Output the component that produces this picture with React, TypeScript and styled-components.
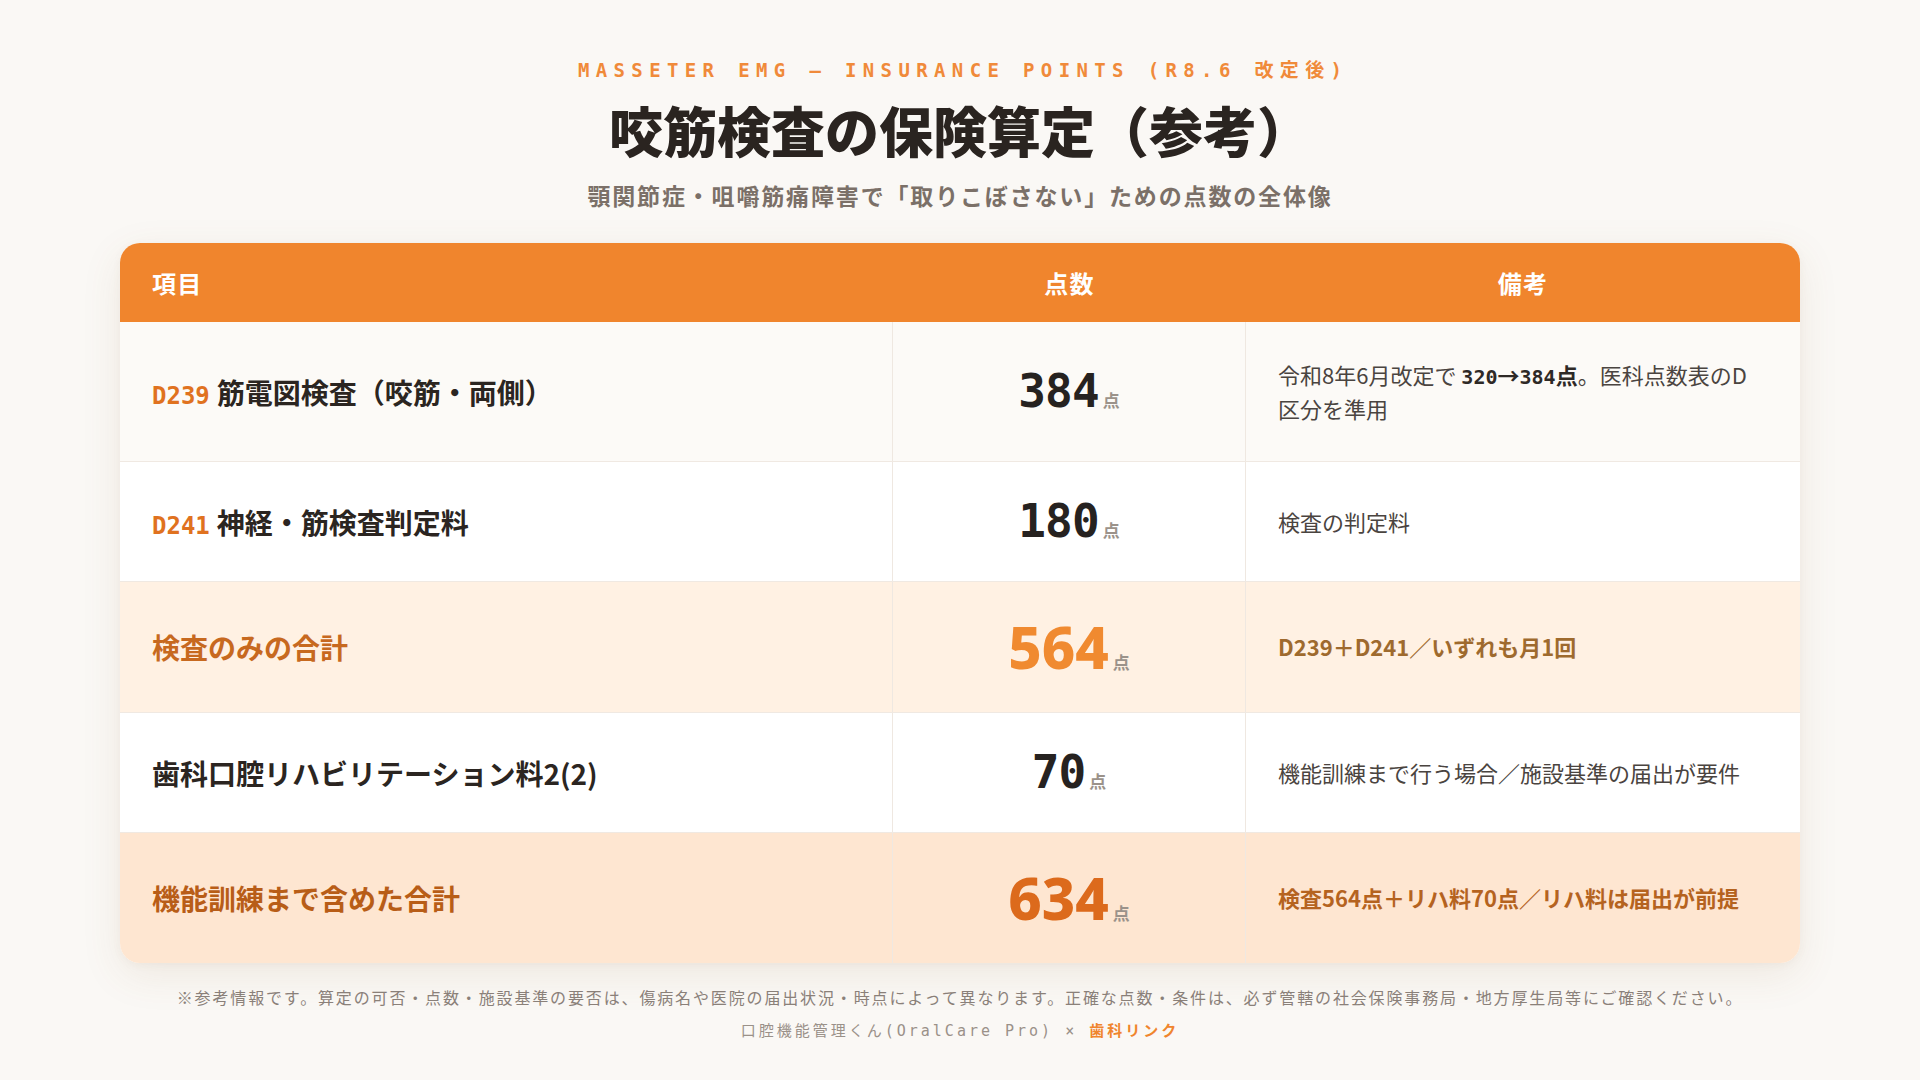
import React from "react";
import styled, { createGlobalStyle } from "styled-components";

const GlobalStyle = createGlobalStyle`
  html, body {
    margin: 0;
    padding: 0;
    background: #faf8f5;
  }
  body {
    font-family: "Noto Sans CJK JP", "Noto Sans", sans-serif;
    color: #2b2521;
  }
  * { box-sizing: border-box; }
`;

const MONO = `"DejaVu Sans Mono", "Noto Sans CJK JP", monospace`;

const Page = styled.main`
  width: 1920px;
  height: 1080px;
  padding: 58px 120px 0;
  display: flex;
  flex-direction: column;
  align-items: center;
  background: #faf8f5;
`;

const Eyebrow = styled.div`
  font-family: ${MONO};
  font-weight: 700;
  font-size: 19px;
  line-height: 24px;
  letter-spacing: 0.335em;
  color: #f08a3a;
  padding-left: 0.335em;
`;

const Title = styled.h1`
  margin: 15px 0 0;
  font-family: "Noto Sans CJK JP", sans-serif;
  font-weight: 900;
  font-size: 54px;
  line-height: 66px;
  letter-spacing: 0;
  color: #2a2420;
`;

const Subtitle = styled.p`
  margin: 16px 0 0;
  font-weight: 700;
  font-size: 23px;
  line-height: 32px;
  letter-spacing: 0.08em;
  color: #7b7068;
`;

const Table = styled.section`
  margin-top: 32px;
  width: 1680px;
  border-radius: 20px;
  overflow: hidden;
  background: #fff;
  box-shadow: 0 12px 40px rgba(140, 96, 50, 0.1), 0 2px 8px rgba(140, 96, 50, 0.05);
`;

const COLS = "773px 353px 1fr";

const HeaderRow = styled.div`
  display: grid;
  grid-template-columns: ${COLS};
  height: 79px;
  background: #f0852d;
  color: #fff;
`;

const HeaderCell = styled.div<{ $align: "left" | "center" }>`
  display: flex;
  align-items: center;
  justify-content: ${(p) => (p.$align === "center" ? "center" : "flex-start")};
  padding: 0 32px;
  font-weight: 700;
  font-size: 24px;
  letter-spacing: 0.05em;
`;

type Tone = "soft" | "white" | "total" | "grand";

const isSum = (t: Tone) => t === "total" || t === "grand";

const bg: Record<Tone, string> = {
  soft: "#fcfaf7",
  white: "#ffffff",
  total: "#fff1e3",
  grand: "#fee6d1",
};

const Row = styled.div<{ $tone: Tone }>`
  display: grid;
  grid-template-columns: ${COLS};
  background: ${(p) => bg[p.$tone]};
  border-top: 1px solid #f0e9e2;
  &:nth-child(2) {
    border-top: none;
  }
`;

const Cell = styled.div`
  display: flex;
  align-items: center;
  padding: 36px 32px;
  border-right: 1px solid #efe8e1;
  &:last-child {
    border-right: none;
  }
`;

const labelColor: Record<Tone, string> = {
  soft: "#2b2521",
  white: "#2b2521",
  total: "#c7691f",
  grand: "#b85d17",
};

const Label = styled.div<{ $tone: Tone }>`
  font-weight: 700;
  font-size: 28px;
  line-height: 38px;
  color: ${(p) => labelColor[p.$tone]};
`;

const Code = styled.span`
  font-family: ${MONO};
  font-weight: 700;
  font-size: 24px;
  line-height: 1;
  color: #e0721f;
  margin-right: 7px;
`;

const PointsCell = styled(Cell)`
  justify-content: center;
`;

const Points = styled.div`
  display: flex;
  align-items: baseline;
  gap: 4px;
`;

const numColor: Record<Tone, string> = {
  soft: "#262220",
  white: "#262220",
  total: "#f08a30",
  grand: "#dc6a1c",
};

const Num = styled.span<{ $tone: Tone }>`
  font-family: ${(p) => (isSum(p.$tone) ? `"Noto Sans", "Open Sans", sans-serif` : MONO)};
  font-weight: ${(p) => (isSum(p.$tone) ? 800 : 700)};
  font-size: ${(p) => (isSum(p.$tone) ? "58px" : "46px")};
  line-height: ${(p) => (isSum(p.$tone) ? "58px" : "47px")};
  color: ${(p) => numColor[p.$tone]};
  letter-spacing: ${(p) => (isSum(p.$tone) ? "0" : "-0.02em")};
`;

const Unit = styled.span`
  font-size: 17px;
  font-weight: 700;
  color: #9b928a;
`;

const noteColor: Record<Tone, string> = {
  soft: "#4a4440",
  white: "#4a4440",
  total: "#9e6a2e",
  grand: "#b5631f",
};

const Note = styled.div<{ $tone: Tone }>`
  font-size: 22px;
  line-height: 33.5px;
  font-weight: ${(p) => (isSum(p.$tone) ? 700 : 400)};
  color: ${(p) => noteColor[p.$tone]};
`;

const NoteStrong = styled.b`
  font-weight: 700;
  color: #2e2926;
`;

const MonoDigits = styled.span`
  font-family: ${MONO};
  font-size: 20px;
  line-height: 1;
`;

const Disclaimer = styled.p`
  margin: 22px 0 0;
  font-size: 16px;
  line-height: 24px;
  letter-spacing: 0.116em;
  color: #8a8079;
`;

const Credit = styled.p`
  margin: 10px 0 0;
  font-family: ${MONO};
  font-size: 15px;
  line-height: 22px;
  letter-spacing: 0.2em;
  color: #9a9189;
`;

const Brand = styled.span`
  font-family: "Noto Sans CJK JP", sans-serif;
  font-weight: 700;
  color: #f0852d;
`;

type RowData = {
  tone: Tone;
  code?: string;
  label: string;
  points: string;
  note: React.ReactNode;
};

const rows: RowData[] = [
  {
    tone: "soft",
    code: "D239",
    label: "筋電図検査（咬筋・両側）",
    points: "384",
    note: (
      <>
        令和8年6月改定で{" "}
        <NoteStrong>
          <MonoDigits>320</MonoDigits>→<MonoDigits>384</MonoDigits>点
        </NoteStrong>
        。医科点数表のD区分を準用
      </>
    ),
  },
  {
    tone: "white",
    code: "D241",
    label: "神経・筋検査判定料",
    points: "180",
    note: "検査の判定料",
  },
  {
    tone: "total",
    label: "検査のみの合計",
    points: "564",
    note: "D239＋D241／いずれも月1回",
  },
  {
    tone: "white",
    label: "歯科口腔リハビリテーション料2(2)",
    points: "70",
    note: "機能訓練まで行う場合／施設基準の届出が要件",
  },
  {
    tone: "grand",
    label: "機能訓練まで含めた合計",
    points: "634",
    note: "検査564点＋リハ料70点／リハ料は届出が前提",
  },
];

export default function App() {
  return (
    <>
      <GlobalStyle />
      <Page>
        <Eyebrow>MASSETER EMG — INSURANCE POINTS (R8.6 改定後)</Eyebrow>
        <Title>咬筋検査の保険算定（参考）</Title>
        <Subtitle>顎関節症・咀嚼筋痛障害で「取りこぼさない」ための点数の全体像</Subtitle>
        <Table>
          <HeaderRow>
            <HeaderCell $align="left">項目</HeaderCell>
            <HeaderCell $align="center">点数</HeaderCell>
            <HeaderCell $align="center">備考</HeaderCell>
          </HeaderRow>
          {rows.map((r) => (
            <Row key={r.points} $tone={r.tone}>
              <Cell>
                <Label $tone={r.tone}>
                  {r.code && <Code>{r.code}</Code>}
                  {r.label}
                </Label>
              </Cell>
              <PointsCell>
                <Points>
                  <Num $tone={r.tone}>{r.points}</Num>
                  <Unit>点</Unit>
                </Points>
              </PointsCell>
              <Cell>
                <Note $tone={r.tone}>{r.note}</Note>
              </Cell>
            </Row>
          ))}
        </Table>
        <Disclaimer>
          ※参考情報です。算定の可否・点数・施設基準の要否は、傷病名や医院の届出状況・時点によって異なります。正確な点数・条件は、必ず管轄の社会保険事務局・地方厚生局等にご確認ください。
        </Disclaimer>
        <Credit>
          口腔機能管理くん(OralCare Pro) × <Brand>歯科リンク</Brand>
        </Credit>
      </Page>
    </>
  );
}
